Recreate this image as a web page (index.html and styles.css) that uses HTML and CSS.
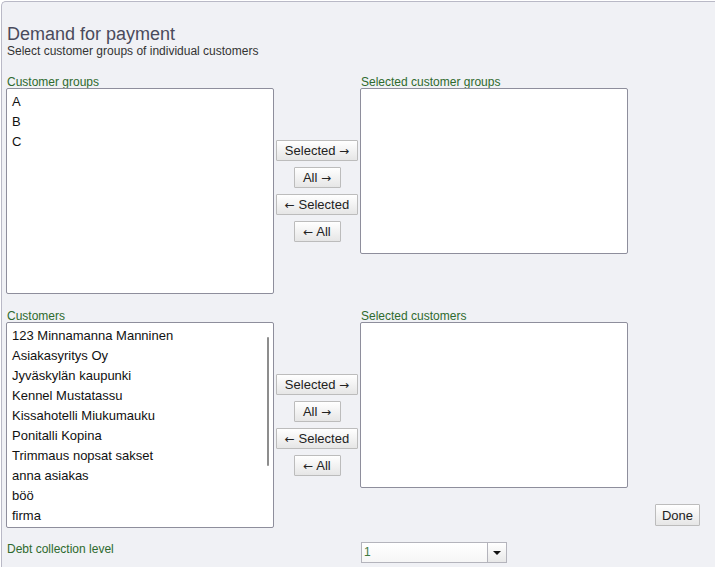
FILE: index.html
```html
<!DOCTYPE html>
<html lang="en">
<head>
  <meta charset="UTF-8" />
  <title>Demand for payment</title>
  <link rel="stylesheet" href="styles.css">
</head>
<body>
  <div class="panel">
    <h1>Demand for payment</h1>
    <p class="intro">Select customer groups of individual customers</p>

    <div class="picker">
      <label class="caption">Customer groups</label>
      <span></span>
      <label class="caption">Selected customer groups</label>
      <span></span>

      <div class="listbox tall">
        <div class="option">A</div>
        <div class="option">B</div>
        <div class="option">C</div>
      </div>
      <div class="movers">
        <button class="wide">Selected <span class="arr">&rarr;</span></button>
        <button>All <span class="arr">&rarr;</span></button>
        <button class="wide"><span class="arr">&larr;</span> Selected</button>
        <button><span class="arr">&larr;</span> All</button>
      </div>
      <div class="listbox short"></div>
      <span></span>

      <label class="caption second">Customers</label>
      <span></span>
      <label class="caption second">Selected customers</label>
      <span></span>

      <div class="listbox tall">
        <div class="option">123 Minnamanna Manninen</div>
        <div class="option">Asiakasyritys Oy</div>
        <div class="option">Jyväskylän kaupunki</div>
        <div class="option">Kennel Mustatassu</div>
        <div class="option">Kissahotelli Miukumauku</div>
        <div class="option">Ponitalli Kopina</div>
        <div class="option">Trimmaus nopsat sakset</div>
        <div class="option">anna asiakas</div>
        <div class="option">böö</div>
        <div class="option">firma</div>
        <div class="thumb"></div>
      </div>
      <div class="movers">
        <button class="wide">Selected <span class="arr">&rarr;</span></button>
        <button>All <span class="arr">&rarr;</span></button>
        <button class="wide"><span class="arr">&larr;</span> Selected</button>
        <button><span class="arr">&larr;</span> All</button>
      </div>
      <div class="listbox short"></div>
      <div class="done-cell">
        <button class="done">Done</button>
      </div>

      <label class="caption level">Debt collection level</label>
      <span></span>
      <div class="dropdown">
        <span class="value">1</span>
        <span class="arrow"></span>
      </div>
      <span></span>
    </div>
  </div>
</body>
</html>
```

FILE: styles.css
```css
html, body {
  margin: 0;
  background: #ffffff;
}
body {
  font-family: "Liberation Sans", Arial, sans-serif;
  font-size: 12px;
  color: #222;
}
.panel {
  margin: 1px 0 0 1px;
  border-top: 1px solid #b9b9c6;
  border-left: 1px solid #b9b9c6;
  border-top-left-radius: 5px;
  background: #f0f1f5;
  padding: 21px 0 6px 4px;
  min-height: 566px;
  box-sizing: border-box;
}
h1 {
  margin: 0 0 0 1px;
  font-size: 18px;
  font-weight: normal;
  line-height: 22px;
  color: #4a4a5c;
}
.intro {
  margin: 0 0 0 1px;
  line-height: 13px;
  color: #333;
}
.picker {
  display: grid;
  grid-template-columns: 268px 86px 268px 1fr;
  margin-top: 16px;
}
.caption {
  margin-left: 1px;
  line-height: 14px;
  padding-top: 1px;
  margin-bottom: -1px;
  color: #2e6a2e;
}
.caption.second {
  margin-top: 14px;
}
.listbox {
  position: relative;
  background: #fff;
  border: 1px solid #8e8e9c;
  border-radius: 2px;
  padding: 3px 0 0 5px;
  box-sizing: border-box;
}
.listbox.tall {
  height: 206px;
}
.listbox.short {
  height: 166px;
}
.option {
  font-size: 13px;
  line-height: 20px;
  color: #111;
}
.thumb {
  position: absolute;
  right: 4px;
  top: 14px;
  width: 2px;
  height: 129px;
  background: #8d8d8d;
  border-radius: 1px;
}
.movers {
  display: flex;
  flex-direction: column;
  align-items: center;
  justify-content: center;
  gap: 6px;
  height: 206px;
}
button {
  font-family: "Liberation Sans", Arial, sans-serif;
  font-size: 13px;
  color: #222;
  height: 21px;
  width: 47px;
  padding: 0;
  border: 1px solid #bcbcbc;
  border-radius: 1px;
  background: linear-gradient(#ffffff, #e6e6e6);
}
button.wide {
  width: 82px;
}
.arr {
  font-family: "DejaVu Sans", sans-serif;
  font-size: 12px;
}
.done-cell {
  display: flex;
  justify-content: flex-end;
  align-items: flex-end;
  padding: 0 15px 2px 0;
}
.done {
  width: 45px;
  height: 22px;
}
.caption.level {
  margin-top: 14px;
  line-height: 14px;
  padding-top: 0;
  margin-bottom: 0;
}
.dropdown {
  margin-top: 14px;
  margin-left: 1px;
  display: flex;
  width: 144px;
  height: 19px;
  border: 1px solid #b4b4bc;
  background: linear-gradient(#ffffff, #f6f6f6);
}
.dropdown .value {
  flex: 1;
  padding-left: 2px;
  line-height: 19px;
  color: #3f7a3f;
}
.dropdown .arrow {
  width: 18px;
  border-left: 1px solid #b4b4bc;
  background: linear-gradient(#ffffff, #e8e8e8);
  display: flex;
  align-items: center;
  justify-content: center;
}
.dropdown .arrow::after {
  content: "";
  border-left: 4px solid transparent;
  border-right: 4px solid transparent;
  border-top: 4px solid #111;
  margin-top: 1px;
}
```
